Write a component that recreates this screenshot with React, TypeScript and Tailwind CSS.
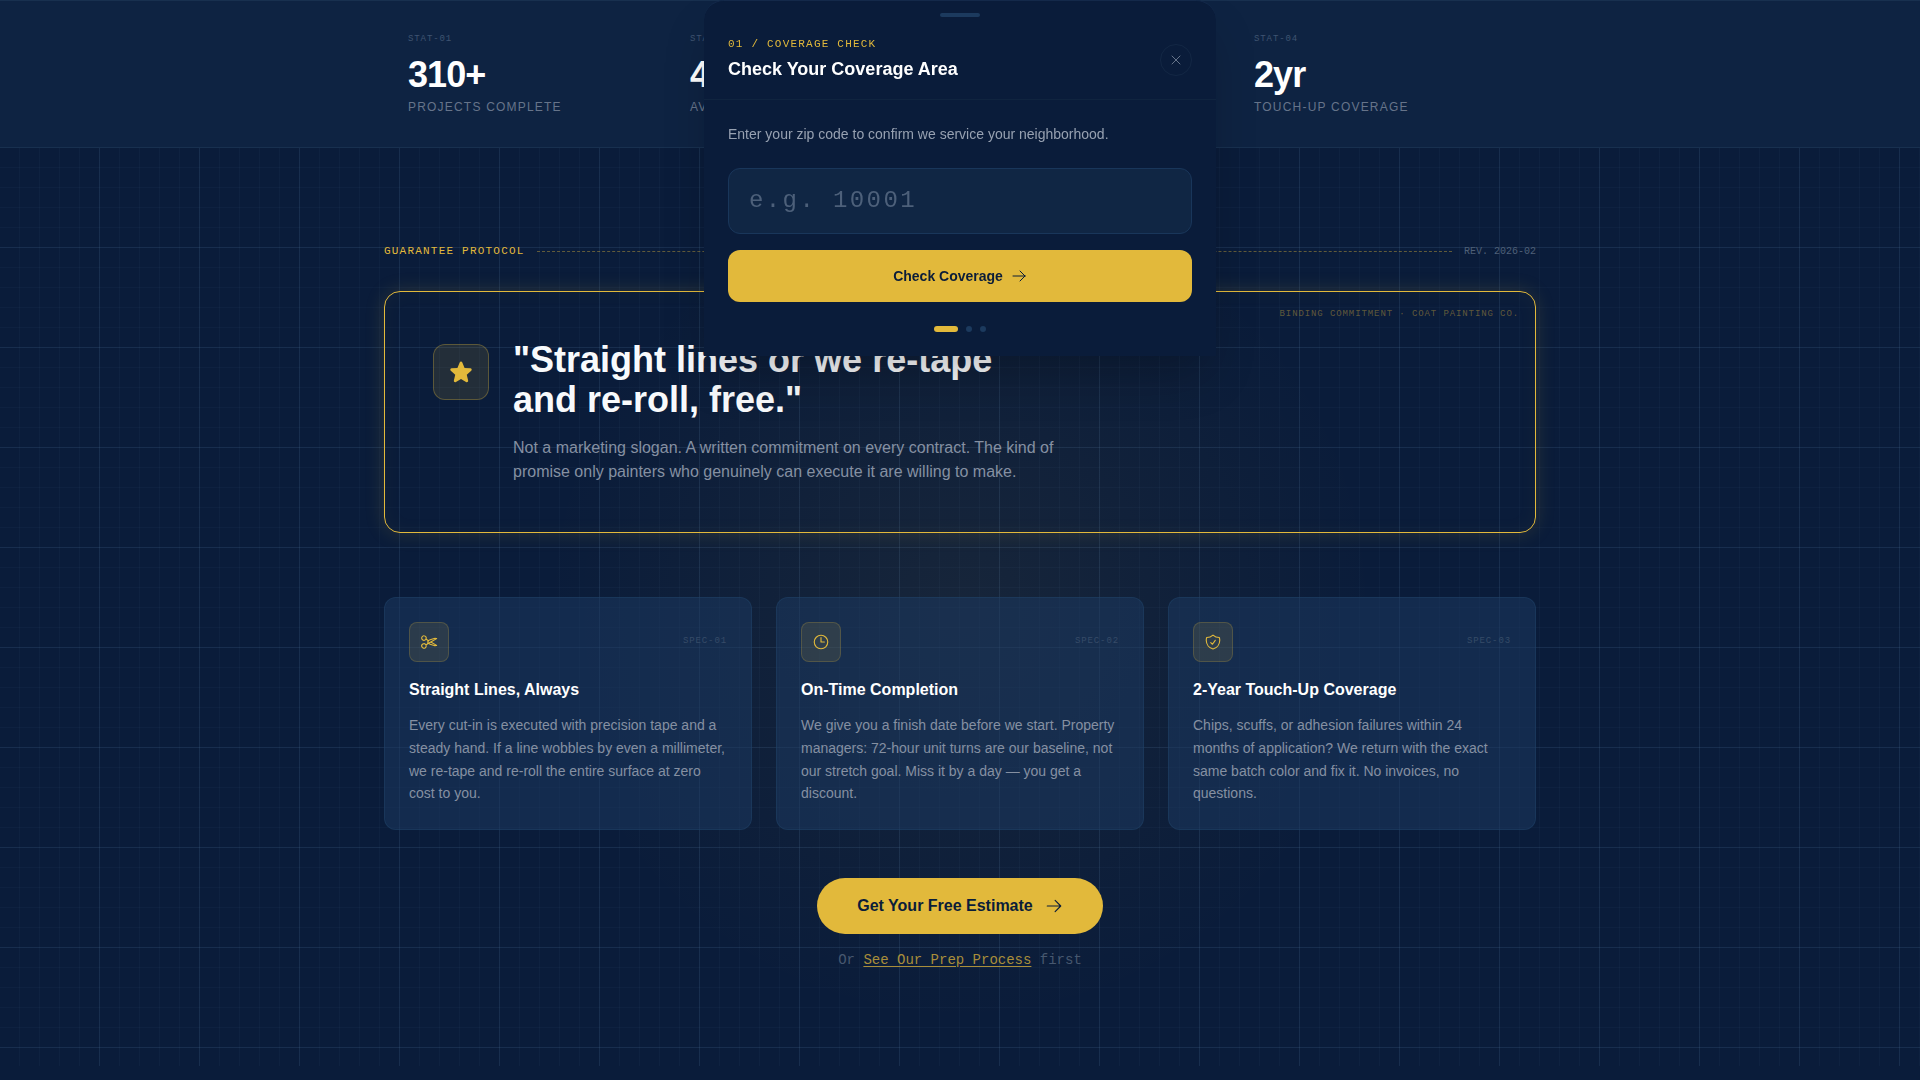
import React from "react";
import type { IconType } from "react-icons";
import {
  HiOutlineArrowRight,
  HiOutlineClock,
  HiOutlineScissors,
  HiOutlineShieldCheck,
  HiOutlineXMark,
  HiStar,
} from "react-icons/hi2";

type Stat = { id: string; value: string; label: string };
type Spec = { id: string; icon: IconType; title: string; text: string };

const stats: Stat[] = [
  { id: "STAT-01", value: "310+", label: "Projects Complete" },
  { id: "STAT-02", value: "4.9", label: "Avg Rating" },
  { id: "STAT-03", value: "72hr", label: "Unit Turns" },
  { id: "STAT-04", value: "2yr", label: "Touch-Up Coverage" },
];

const specs: Spec[] = [
  {
    id: "SPEC-01",
    icon: HiOutlineScissors,
    title: "Straight Lines, Always",
    text: "Every cut-in is executed with precision tape and a steady hand. If a line wobbles by even a millimeter, we re-tape and re-roll the entire surface at zero cost to you.",
  },
  {
    id: "SPEC-02",
    icon: HiOutlineClock,
    title: "On-Time Completion",
    text: "We give you a finish date before we start. Property managers: 72-hour unit turns are our baseline, not our stretch goal. Miss it by a day — you get a discount.",
  },
  {
    id: "SPEC-03",
    icon: HiOutlineShieldCheck,
    title: "2-Year Touch-Up Coverage",
    text: "Chips, scuffs, or adhesion failures within 24 months of application? We return with the exact same batch color and fix it. No invoices, no questions.",
  },
];

const mono = "font-['Liberation_Mono',monospace]";

function StatsBar() {
  return (
    <section className="border-y border-[#18304f] bg-[#0e2342]">
      <div className="max-w-6xl mx-auto px-6 py-8 grid grid-cols-4 gap-6">
        {stats.map((stat) => (
          <div key={stat.id}>
            <p className={`${mono} text-[9px] leading-3 tracking-widest text-[#3f5471]`}>
              {stat.id}
            </p>
            <p className="mt-3 text-4xl leading-9 font-bold tracking-tight text-white">
              {stat.value}
            </p>
            <p className="mt-1.5 text-xs tracking-widest uppercase text-[#66748a]">
              {stat.label}
            </p>
          </div>
        ))}
      </div>
    </section>
  );
}

function Pledge() {
  return (
    <div className="relative mt-8 rounded-2xl border border-[#e2b93b] p-12 shadow-[0_0_20px_rgba(226,185,59,0.15),inset_0_0_20px_rgba(226,185,59,0.04)]">
      <span className={`${mono} absolute top-4 right-4 text-[9px] leading-3 tracking-widest text-[#e2b93b]/40`}>
        BINDING COMMITMENT · COAT PAINTING CO.
      </span>
      <div className="flex items-start gap-6">
        <div className="mt-1 w-14 h-14 shrink-0 flex items-center justify-center rounded-xl border border-[#e2b93b]/30 bg-[#e2b93b]/12">
          <HiStar className="w-[26px] h-[26px] text-[#e2b93b]" aria-hidden="true" />
        </div>
        <div>
          <h2 className="text-4xl leading-10 font-bold text-slate-50">
            "Straight lines or we re-tape
            <br />
            and re-roll, free."
          </h2>
          <p className="mt-4 max-w-xl text-base text-[#8590a2]">
            Not a marketing slogan. A written commitment on every contract. The
            kind of promise only painters who genuinely can execute it are
            willing to make.
          </p>
        </div>
      </div>
    </div>
  );
}

function SpecCard({ id, icon: Icon, title, text }: Spec) {
  return (
    <article className="rounded-xl border border-[#24486d]/40 bg-[#1c3a62]/50 p-6">
      <div className="flex items-start justify-between">
        <div className="w-10 h-10 flex items-center justify-center rounded-lg border border-[#e2b93b]/20 bg-[#e2b93b]/12">
          <Icon className="w-[18px] h-[18px] text-[#e2b93b]" aria-hidden="true" />
        </div>
        <span className={`${mono} mt-3 text-[9px] leading-[14px] tracking-widest text-[#364b68]`}>
          {id}
        </span>
      </div>
      <h3 className="mt-4 text-base font-bold text-white">{title}</h3>
      <p className="mt-3 text-sm leading-relaxed text-[#8590a2]">{text}</p>
    </article>
  );
}

function Guarantee() {
  return (
    <section className="relative px-6 py-24">
      {/* blueprint grid: 20px minor, 100px major */}
      <div className="absolute inset-0 bg-[repeating-linear-gradient(180deg,transparent_0_99px,rgba(90,130,170,0.13)_99px_100px),repeating-linear-gradient(90deg,transparent_0_99px,rgba(90,130,170,0.13)_99px_100px),repeating-linear-gradient(180deg,transparent_0_19px,rgba(90,130,170,0.05)_19px_20px),repeating-linear-gradient(90deg,transparent_0_19px,rgba(90,130,170,0.05)_19px_20px)]" />
      <div className="absolute inset-0 bg-[radial-gradient(circle_420px_at_center,rgba(226,185,59,0.06),transparent)]" />

      <div className="relative max-w-6xl mx-auto">
        <div className="flex items-center gap-3">
          <span className={`${mono} text-[11px] leading-[15px] tracking-[0.11em] text-[#e2b93b]`}>
            GUARANTEE PROTOCOL
          </span>
          <span className="flex-1 border-t border-dashed border-[#e2b93b]/40" />
          <span className={`${mono} text-[10px] leading-[15px] text-[#4f6078]`}>REV. 2026-02</span>
        </div>

        <Pledge />

        <div className="mt-16 grid grid-cols-3 gap-6">
          {specs.map((spec) => (
            <SpecCard key={spec.id} {...spec} />
          ))}
        </div>

        <div className="mt-12 flex flex-col items-center gap-4">
          <button
            type="button"
            className="h-14 px-10 flex items-center gap-3 rounded-full bg-[#e2b93b] text-base font-bold text-[#0b1d39]"
          >
            Get Your Free Estimate
            <HiOutlineArrowRight className="w-[18px] h-[18px]" aria-hidden="true" />
          </button>
          <p className={`${mono} text-sm text-[#47586f]`}>
            Or{" "}
            <a href="#process" className="text-[#a98e3a] underline underline-offset-2">
              See Our Prep Process
            </a>{" "}
            first
          </p>
        </div>
      </div>
    </section>
  );
}

function CoverageSheet() {
  return (
    <div
      role="dialog"
      aria-labelledby="coverage-title"
      className="fixed inset-x-0 top-0 z-10 mx-auto w-full max-w-lg rounded-t-[20px] border-t border-[#14294a] bg-[#0a1c3a] shadow-2xl"
    >
      <div className="mx-auto mt-3 w-10 h-1 rounded-full bg-[#1c3a5e]" />
      <div className="flex items-center justify-between px-6 pt-5 pb-4 border-b border-[#10243f]">
        <div>
          <p className={`${mono} text-[11px] leading-[14px] tracking-[0.11em] text-[#e2b93b]`}>
            01 / COVERAGE CHECK
          </p>
          <h2 id="coverage-title" className="mt-1 text-lg leading-7 font-bold text-white">
            Check Your Coverage Area
          </h2>
        </div>
        <button
          type="button"
          aria-label="Close"
          className="w-8 h-8 flex items-center justify-center rounded-full border border-[#132744] text-[#66748a]"
        >
          <HiOutlineXMark className="w-4 h-4" aria-hidden="true" />
        </button>
      </div>
      <form className="p-6">
        <label htmlFor="zip" className="block text-sm text-[#97a1b1]">
          Enter your zip code to confirm we service your neighborhood.
        </label>
        <input
          id="zip"
          type="text"
          inputMode="numeric"
          placeholder="e.g. 10001"
          className={`${mono} mt-6 w-full rounded-xl border border-[#19365a] bg-[#102644] px-5 py-4 text-2xl tracking-widest text-white placeholder:text-[#4d607a]`}
        />
        <button
          type="button"
          className="mt-4 w-full h-13 flex items-center justify-center gap-2 rounded-xl bg-[#e2b93b] text-sm font-bold text-[#0b1d39]"
        >
          Check Coverage
          <HiOutlineArrowRight className="w-4 h-4" aria-hidden="true" />
        </button>
        <div className="mt-6 flex justify-center gap-2">
          <span className="w-6 h-1.5 rounded-full bg-[#e2b93b]" />
          <span className="w-1.5 h-1.5 rounded-full bg-[#1c3a5e]" />
          <span className="w-1.5 h-1.5 rounded-full bg-[#1c3a5e]" />
        </div>
      </form>
    </div>
  );
}

export default function App() {
  return (
    <div className="min-h-screen bg-[#0a1c3a] font-['Liberation_Sans',sans-serif]">
      <StatsBar />
      <Guarantee />
      <CoverageSheet />
    </div>
  );
}
